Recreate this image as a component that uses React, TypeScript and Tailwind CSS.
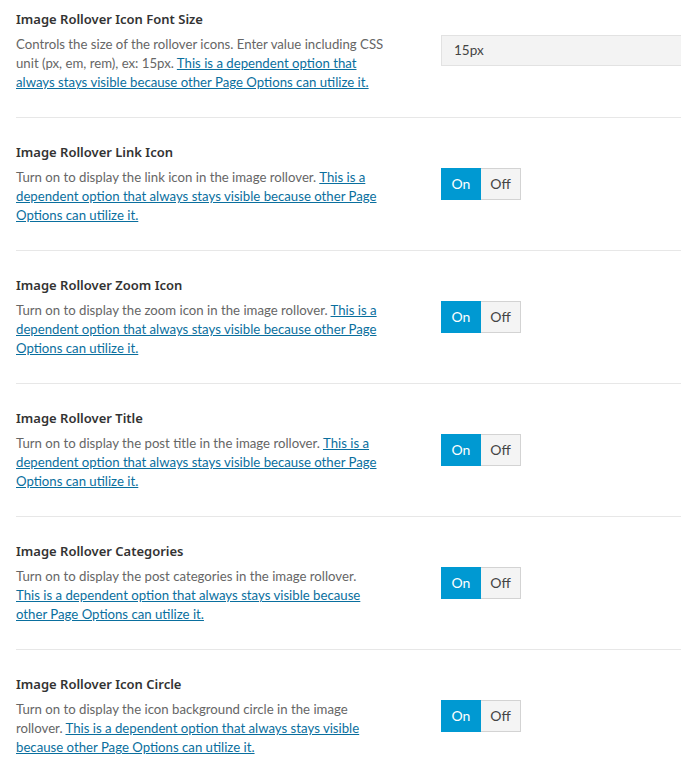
import React from 'react';

const linkText = 'This is a dependent option that always stays visible because other Page Options can utilize it.';

const options = [
  { title: 'Image Rollover Link Icon', desc: 'Turn on to display the link icon in the image rollover.' },
  { title: 'Image Rollover Zoom Icon', desc: 'Turn on to display the zoom icon in the image rollover.' },
  { title: 'Image Rollover Title', desc: 'Turn on to display the post title in the image rollover.' },
  { title: 'Image Rollover Categories', desc: 'Turn on to display the post categories in the image rollover.', wrap: true },
  { title: 'Image Rollover Icon Circle', desc: 'Turn on to display the icon background circle in the image rollover.' },
];

function Toggle() {
  return (
    <div className="flex h-[32px] w-[80px] text-[14px]">
      <div className="flex w-[40px] items-center justify-center bg-[#0099d2] text-white">On</div>
      <div className="flex w-[40px] items-center justify-center border border-l-0 border-[#d3d3d3] bg-[#f4f4f4] text-[#444]">Off</div>
    </div>
  );
}

function Row({ title, desc, first, wrap, children }: { title: string; desc: string; first?: boolean; wrap?: boolean; children: React.ReactNode }) {
  return (
    <div className={`flex items-center border-[#e7e7e7] ${first ? 'pt-[9px] pb-[25px]' : 'border-t pt-[24px] pb-[25px]'}`}>
      <div className="w-[368px] shrink-0">
        <h3 className="font-['Noto_Sans',sans-serif] text-[13px] font-semibold leading-[20px] text-[#333]">{title}</h3>
        <p className="mt-[6px] text-[13.2px] leading-[19px] text-[#666]">
          {desc}{wrap ? <br /> : ' '}
          <a href="#" className="text-[#0a6f9e] underline">{linkText}</a>
        </p>
      </div>
      <div className="ml-[57px] flex-1">{children}</div>
    </div>
  );
}

export default function App() {
  return (
    <div className="min-h-screen overflow-hidden bg-white pl-[16px]" style={{ fontFamily: 'Lato, sans-serif' }}>
      <Row
        first
        title="Image Rollover Icon Font Size"
        desc="Controls the size of the rollover icons. Enter value including CSS unit (px, em, rem), ex: 15px."
      >
        <div className="-mr-[20px] flex h-[31px] items-center border border-[#e2e2e2] bg-[#f3f3f3] pl-[12px] text-[13.5px] text-[#444]">
          15px
        </div>
      </Row>
      {options.map((o) => (
        <Row key={o.title} title={o.title} desc={o.desc} wrap={o.wrap}>
          <Toggle />
        </Row>
      ))}
    </div>
  );
}
